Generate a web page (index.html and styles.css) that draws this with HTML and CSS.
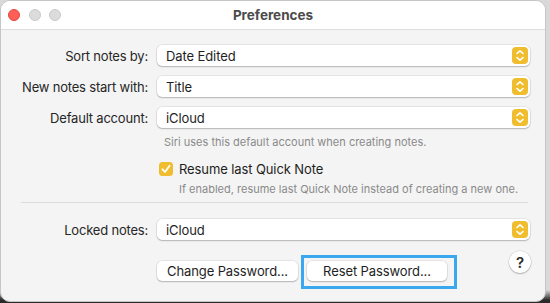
FILE: index.html
```html
<!DOCTYPE html>
<html lang="en">
<head>
    <meta charset="UTF-8">
    <title>Preferences</title>
    <link rel="stylesheet" href="styles.css">
</head>
<body>

    <div class="window">
        <div class="titlebar">
            <div class="lights">
                <span class="light red"></span>
                <span class="light"></span>
                <span class="light"></span>
            </div>
            <div class="title">Preferences</div>
            <div></div>
        </div>

        <div class="content">
            <div class="form-grid">
                <label>Sort notes by:</label>
                <div class="popup">Date Edited<span class="stepper"><svg viewBox="0 0 16 17" width="16" height="17"><path d="M5 6.5 L8 3.8 L11 6.5 M5 10.5 L8 13.2 L11 10.5" fill="none" stroke="#fff" stroke-width="1.6" stroke-linecap="round" stroke-linejoin="round"/></svg></span></div>

                <label>New notes start with:</label>
                <div class="popup">Title<span class="stepper"><svg viewBox="0 0 16 17" width="16" height="17"><path d="M5 6.5 L8 3.8 L11 6.5 M5 10.5 L8 13.2 L11 10.5" fill="none" stroke="#fff" stroke-width="1.6" stroke-linecap="round" stroke-linejoin="round"/></svg></span></div>

                <label>Default account:</label>
                <div class="popup">iCloud<span class="stepper"><svg viewBox="0 0 16 17" width="16" height="17"><path d="M5 6.5 L8 3.8 L11 6.5 M5 10.5 L8 13.2 L11 10.5" fill="none" stroke="#fff" stroke-width="1.6" stroke-linecap="round" stroke-linejoin="round"/></svg></span></div>
            </div>

            <div class="options">
                <p class="hint siri">Siri uses this default account when creating notes.</p>
                <div class="check-row">
                    <span class="checkbox"><svg viewBox="0 0 14 14" width="14" height="14"><path d="M3.5 7.3 L6 10 L10.6 3.8" fill="none" stroke="#fff" stroke-width="1.8" stroke-linecap="round" stroke-linejoin="round"/></svg></span>
                    <span>Resume last Quick Note</span>
                </div>
                <p class="hint quick">If enabled, resume last Quick Note instead of creating a new one.</p>
            </div>

            <hr class="divider">

            <div class="form-grid locked">
                <label>Locked notes:</label>
                <div class="popup">iCloud<span class="stepper"><svg viewBox="0 0 16 17" width="16" height="17"><path d="M5 6.5 L8 3.8 L11 6.5 M5 10.5 L8 13.2 L11 10.5" fill="none" stroke="#fff" stroke-width="1.6" stroke-linecap="round" stroke-linejoin="round"/></svg></span></div>

                <div></div>
                <div class="buttons">
                    <button class="btn change">Change Password...</button>
                    <button class="btn reset highlight">Reset Password...</button>
                    <button class="help">?</button>
                </div>
            </div>
        </div>
    </div>

</body>
</html>
```

FILE: styles.css
```css
* {
    margin: 0;
    padding: 0;
    box-sizing: border-box;
    font-family: Inter, "Noto Sans", sans-serif;
}

body {
    background: linear-gradient(#d9d9d9, #d9d9d9 290px, #2a2a2a 300px);
    width: 550px;
    height: 303px;
    overflow: hidden;
}

.window {
    width: 546px;
    height: 302px;
    background: #f4f4f4;
    border: 1px solid #c6c6c6;
    border-radius: 10px;
    overflow: hidden;
    display: flex;
    flex-direction: column;
}

.titlebar {
    height: 29px;
    background: #ffffff;
    border-bottom: 1px solid #dedede;
    display: grid;
    grid-template-columns: 1fr auto 1fr;
    align-items: center;
    flex-shrink: 0;
}

.lights {
    display: flex;
    gap: 8.5px;
    padding-left: 7px;
}

.light {
    width: 12px;
    height: 12px;
    border-radius: 50%;
    background: #dcdcdc;
    border: 0.5px solid #c9c9c9;
}

.light.red {
    background: #fe5f57;
    border-color: #e2463f;
}

.title {
    font-size: 13.5px;
    font-weight: 700;
    color: #4b4b4b;
}

.content {
    padding-top: 15px;
}

.form-grid {
    display: grid;
    grid-template-columns: 147px 1fr;
    column-gap: 9px;
    row-gap: 10px;
    padding-right: 15px;
    align-items: center;
}

label {
    text-align: right;
    font-size: 13px;
    color: #262626;
    letter-spacing: -0.2px;
}

.popup {
    height: 21px;
    background: #ffffff;
    border-radius: 5px;
    box-shadow: 0 0 0 0.5px rgba(0, 0, 0, 0.12), 0 1px 1.5px rgba(0, 0, 0, 0.22);
    display: flex;
    align-items: center;
    justify-content: space-between;
    padding: 0 2px 0 9px;
    font-size: 13px;
    color: #1e1e1e;
    letter-spacing: -0.1px;
}

.stepper {
    width: 16px;
    height: 17px;
    border-radius: 4px;
    background: #efbd2e;
    display: flex;
}

.options {
    padding-left: 163px;
}

.hint {
    font-size: 11px;
    color: #8a8a8a;
    line-height: 14px;
}

.siri {
    margin-top: 7px;
}

.check-row {
    display: flex;
    align-items: center;
    gap: 6px;
    margin-top: 12px;
    margin-left: -5px;
    font-size: 13px;
    color: #1e1e1e;
    letter-spacing: -0.1px;
}

.checkbox {
    width: 14px;
    height: 14px;
    border-radius: 3.5px;
    background: #efbd2e;
    display: flex;
}

.quick {
    margin-top: 5px;
    margin-left: 15px;
}

.divider {
    border: none;
    border-top: 1px solid #dcdcdc;
    margin: 6px 17px 0 20px;
}

.locked {
    margin-top: 16px;
    row-gap: 21px;
}

.buttons {
    display: flex;
    align-items: flex-start;
    gap: 9px;
}

.btn {
    height: 20px;
    background: #ffffff;
    border: none;
    border-radius: 5px;
    box-shadow: 0 0 0 0.5px rgba(0, 0, 0, 0.12), 0 1px 1.5px rgba(0, 0, 0, 0.22);
    font-size: 13px;
    color: #1e1e1e;
    letter-spacing: -0.1px;
}

.change {
    width: 141px;
}

.reset {
    width: 140px;
}

.highlight {
    position: relative;
}

.highlight::after {
    content: "";
    position: absolute;
    top: -6px;
    left: -6px;
    right: -10px;
    bottom: -8px;
    border: 3px solid #3aa8ee;
}

.help {
    margin-left: auto;
    margin-top: -10px;
    margin-right: -1px;
    width: 22px;
    height: 22px;
    border-radius: 50%;
    border: none;
    background: #ffffff;
    box-shadow: 0 0 0 0.5px rgba(0, 0, 0, 0.15), 0 1px 1.5px rgba(0, 0, 0, 0.22);
    font-size: 15px;
    font-weight: 600;
    color: #2a2a2a;
}
```
